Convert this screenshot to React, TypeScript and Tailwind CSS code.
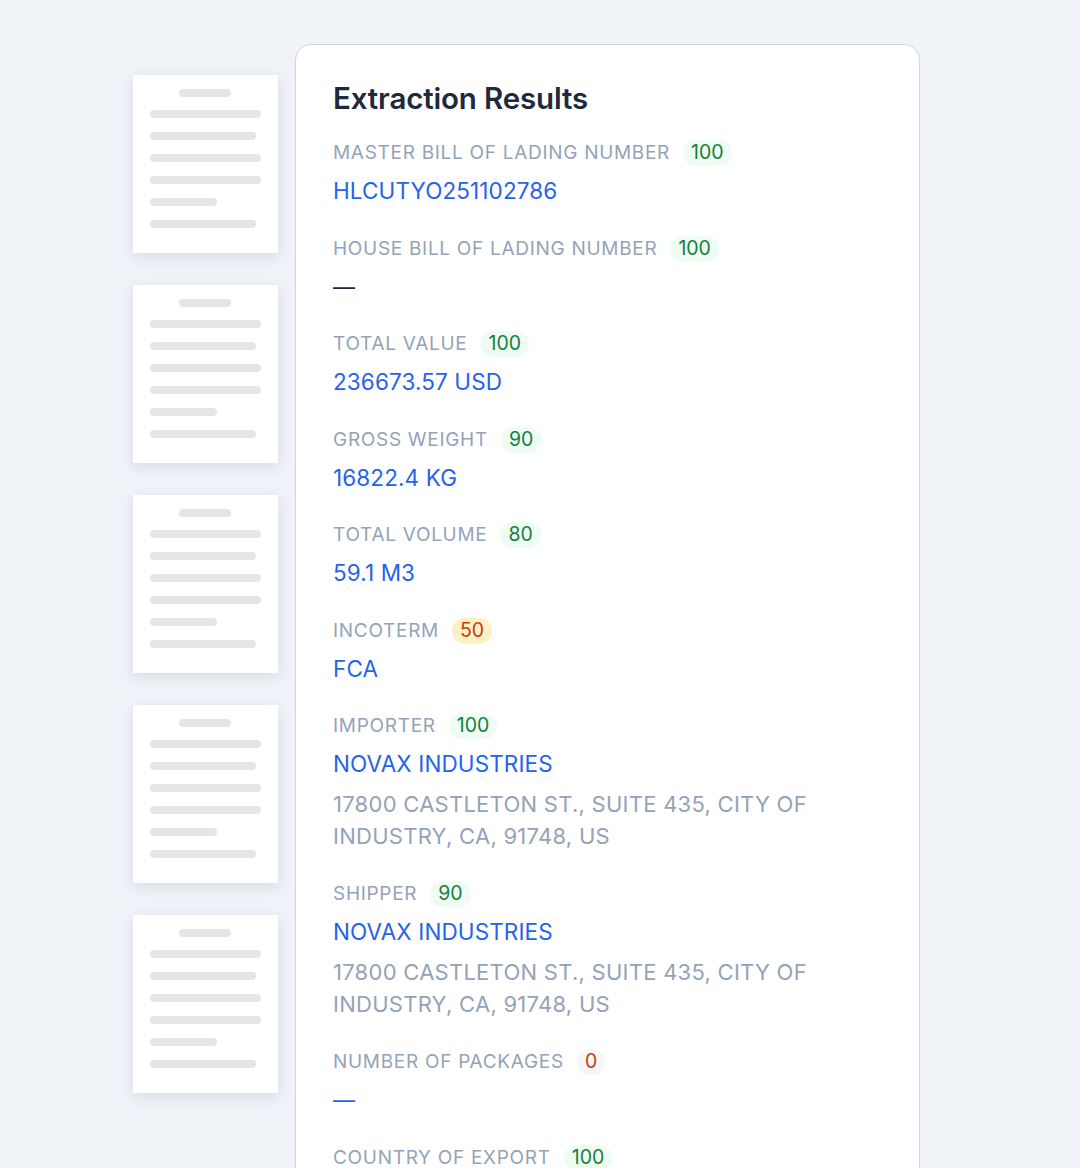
import React from 'react';

type Tone = 'green' | 'amber' | 'zero';

type Field = {
  label: string;
  score: number;
  tone: Tone;
  value?: string;
  dash?: 'dark' | 'blue';
  address?: string[];
};

const fields: Field[] = [
  { label: 'Master Bill of Lading Number', score: 100, tone: 'green', value: 'HLCUTYO251102786' },
  { label: 'House Bill of Lading Number', score: 100, tone: 'green', dash: 'dark' },
  { label: 'Total Value', score: 100, tone: 'green', value: '236673.57 USD' },
  { label: 'Gross Weight', score: 90, tone: 'green', value: '16822.4 KG' },
  { label: 'Total Volume', score: 80, tone: 'green', value: '59.1 M3' },
  { label: 'Incoterm', score: 50, tone: 'amber', value: 'FCA' },
  {
    label: 'Importer',
    score: 100,
    tone: 'green',
    value: 'NOVAX INDUSTRIES',
    address: ['17800 CASTLETON ST., SUITE 435, CITY OF', 'INDUSTRY, CA, 91748, US'],
  },
  {
    label: 'Shipper',
    score: 90,
    tone: 'green',
    value: 'NOVAX INDUSTRIES',
    address: ['17800 CASTLETON ST., SUITE 435, CITY OF', 'INDUSTRY, CA, 91748, US'],
  },
  { label: 'Number of Packages', score: 0, tone: 'zero', dash: 'blue' },
  { label: 'Country of Export', score: 100, tone: 'green', value: 'JAPAN' },
];

const badgeTone: Record<Tone, string> = {
  green: 'bg-[#effcf2] text-[#15803d] px-[8px]',
  amber: 'bg-[#fdf0c4] text-[#c2410c] px-[8px]',
  zero: 'bg-[#f6f6f6] text-[#c2410c] px-[8px]',
};

function PageThumb() {
  // tiny doc preview with grey text bars
  return (
    <div className="w-[145px] h-[178px] bg-white shadow-[0_4px_14px_rgba(100,116,139,0.18)] flex flex-col items-start pl-[17px] pt-[14px]">
      <div className="ml-[29px] w-[52px] h-[8px] rounded-full bg-[#e5e5e5]" />
      <div className="mt-[13px] flex flex-col gap-[14px]">
        <div className="w-[111px] h-[8px] rounded-full bg-[#e5e5e5]" />
        <div className="w-[106px] h-[8px] rounded-full bg-[#e5e5e5]" />
        <div className="w-[111px] h-[8px] rounded-full bg-[#e5e5e5]" />
        <div className="w-[111px] h-[8px] rounded-full bg-[#e5e5e5]" />
        <div className="w-[67px] h-[8px] rounded-full bg-[#e5e5e5]" />
        <div className="w-[106px] h-[8px] rounded-full bg-[#e5e5e5]" />
      </div>
    </div>
  );
}

function FieldRow({ f }: { f: Field }) {
  return (
    <div className="flex flex-col">
      <div className="flex items-center h-[26px] gap-[13px]">
        <span className="text-[19px] leading-[24px] uppercase tracking-[0.037em] text-[#94a3b8]">{f.label}</span>
        <span className={`h-[26px] flex items-center rounded-full text-[19.5px] leading-none ${badgeTone[f.tone]}`}>
          {f.score}
        </span>
      </div>
      {f.value && (
        <div className="mt-[11px] text-[22.5px] leading-[28px] text-[#2563eb] tracking-[0.005em]">{f.value}</div>
      )}
      {f.dash === 'dark' && <div className="mt-[11px] text-[22px] leading-[28px] text-[#1e293b]">—</div>}
      {f.dash === 'blue' && <div className="mt-[11px] text-[22px] leading-[28px] text-[#2563eb]">—</div>}
      {f.address && (
        <div className="mt-[10px] mb-[-1.5px] text-[22px] leading-[32px] text-[#94a3b8] tracking-[0.012em]">
          {f.address.map((l) => (
            <div key={l}>{l}</div>
          ))}
        </div>
      )}
    </div>
  );
}

export default function App() {
  return (
    <div
      className="w-[1080px] h-[1168px] overflow-hidden bg-[#f0f3f8] flex items-start pl-[133px] pt-[44px] gap-[17px]"
      style={{ fontFamily: 'Inter, "Noto Sans", sans-serif' }}
    >
      <div className="mt-[31px] flex flex-col gap-[32px]">
        <PageThumb />
        <PageThumb />
        <PageThumb />
        <PageThumb />
        <PageThumb />
      </div>

      <div className="w-[625px] h-[1200px] bg-white rounded-[16px] border-[1.5px] border-[#d1d6df] pl-[37px] pt-[36px] shadow-[0_1px_3px_rgba(15,23,42,0.05)]">
        <h1 className="text-[29.5px] leading-[34px] font-semibold text-[#1e293b] tracking-[-0.005em]">Extraction Results</h1>
        <div className="mt-[25px] flex flex-col gap-[30.5px]">
          {fields.map((f) => (
            <FieldRow key={f.label} f={f} />
          ))}
        </div>
      </div>
    </div>
  );
}
